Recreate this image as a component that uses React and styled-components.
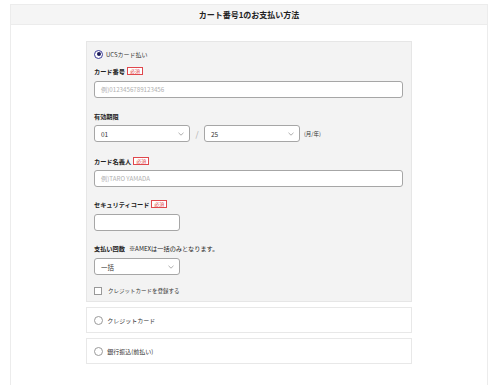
import React from "react";
import styled, { createGlobalStyle } from "styled-components";

const GlobalStyle = createGlobalStyle`
  body {
    margin: 0;
    background: #fff;
    font-family: "Noto Sans CJK JP", "Noto Sans", sans-serif;
    color: #333;
  }
`

const Page = styled.div`
  padding: 4px 12px 0 10px;
`

const Card = styled.div`
  border: 1px solid #ececec;
  border-bottom: none;
  min-height: 390px;
`

const Header = styled.div`
  height: 19px;
  background: #f5f5f5;
  border-bottom: 1px solid #ececec;
  display: flex;
  align-items: center;
  justify-content: center;
  font-size: 8px;
  font-weight: 700;
  color: #222;
`

const Body = styled.div`
  width: 326px;
  margin: 16px auto 0;
  display: flex;
  flex-direction: column;
  gap: 5px;
`

const GrayBox = styled.div`
  background: #f3f3f3;
  border: 1px solid #e6e6e6;
  padding: 7px 8px 5px 7px;
`

const OptionBox = styled.div`
  border: 1px solid #e8e8e8;
  height: 24px;
  padding: 0 7px;
  display: flex;
  align-items: center;
`

const RadioRow = styled.div`
  display: flex;
  align-items: center;
  gap: 3px;
  height: 10px;
  font-size: 6px;
`

const Radio = styled.span`
  width: 7px;
  height: 7px;
  border-radius: 50%;
  border: 1px solid ${props => (props.$checked ? "#3b3b9a" : "#9a9a9a")};
  background: #fff;
  display: flex;
  align-items: center;
  justify-content: center;
  &::after {
    content: "";
    display: ${props => (props.$checked ? "block" : "none")};
    width: 4px;
    height: 4px;
    border-radius: 50%;
    background: #1c1c5a;
  }
`

const Field = styled.div`
  margin-top: ${props => props.$mt}px;
  display: flex;
  flex-direction: column;
  gap: ${props => props.$gap || 4}px;
`

const Label = styled.div`
  display: flex;
  align-items: center;
  gap: 2px;
  height: 10px;
  font-size: 6.2px;
  font-weight: 700;
  color: #222;
`

const Note = styled.span`
  font-weight: 400;
  margin-left: 2px;
`

const Required = styled.span`
  border: 1px solid #e0474c;
  color: #e0474c;
  background: #fff;
  font-size: 5px;
  font-weight: 400;
  line-height: 6px;
  padding: 0 2px;
`

const TextInput = styled.div`
  box-sizing: border-box;
  width: ${props => props.$w || "309px"};
  height: 17px;
  background: #fff;
  border: 1px solid #a6a6a6;
  border-radius: 3px;
  padding: 0 6px;
  display: flex;
  align-items: center;
  font-size: 6.2px;
  color: #b0b0b0;
`

const Select = styled.div`
  box-sizing: border-box;
  width: ${props => props.$w}px;
  height: 17px;
  background: #fff;
  border: 1px solid #a6a6a6;
  border-radius: 3px;
  padding: 0 5px 0 6px;
  display: flex;
  align-items: center;
  justify-content: space-between;
  font-size: 6.5px;
  color: #333;
`

const Row = styled.div`
  display: flex;
  align-items: center;
`

const Slash = styled.span`
  width: 14px;
  text-align: center;
  font-size: 8px;
  color: #aaa;
`

const Unit = styled.span`
  margin-left: 4px;
  font-size: 5.5px;
`

const CheckRow = styled.div`
  display: flex;
  align-items: center;
  gap: 6px;
  height: 10px;
  margin-top: 11px;
  font-size: 5.5px;
`

const Check = styled.span`
  box-sizing: border-box;
  width: 8px;
  height: 8px;
  border: 1px solid #999;
  background: #fff;
`

function Chevron() {
  return (
    <svg width="6" height="4" viewBox="0 0 6 4">
      <path d="M0.5 0.8 L3 3.2 L5.5 0.8" fill="none" stroke="#999" strokeWidth="0.8" />
    </svg>
  )
}

export default function App() {
  return (
    <Page>
      <GlobalStyle />
      <Card>
        <Header>カート番号1のお支払い方法</Header>
        <Body>
          <GrayBox>
            <RadioRow>
              <Radio $checked />
              UCSカード払い
            </RadioRow>

            <Field $mt={7} $gap={5}>
              <Label>カード番号<Required>必須</Required></Label>
              <TextInput>例)0123456789123456</TextInput>
            </Field>

            <Field $mt={13}>
              <Label>有効期限</Label>
              <Row>
                <Select $w={96}>01<Chevron /></Select>
                <Slash>/</Slash>
                <Select $w={96}>25<Chevron /></Select>
                <Unit>(月/年)</Unit>
              </Row>
            </Field>

            <Field $mt={14}>
              <Label>カード名義人<Required>必須</Required></Label>
              <TextInput>例)TARO YAMADA</TextInput>
            </Field>

            <Field $mt={12} $gap={5}>
              <Label>セキュリティコード<Required>必須</Required></Label>
              <TextInput $w="86px" />
            </Field>

            <Field $mt={12} $gap={5}>
              <Label>支払い回数<Note>※AMEXは一括のみとなります。</Note></Label>
              <Select $w={86}>一括<Chevron /></Select>
            </Field>

            <CheckRow>
              <Check />
              クレジットカードを登録する
            </CheckRow>
          </GrayBox>

          <OptionBox>
            <RadioRow>
              <Radio />
              &nbsp;クレジットカード
            </RadioRow>
          </OptionBox>

          <OptionBox>
            <RadioRow>
              <Radio />
              &nbsp;銀行振込(前払い)
            </RadioRow>
          </OptionBox>
        </Body>
      </Card>
    </Page>
  )
}
